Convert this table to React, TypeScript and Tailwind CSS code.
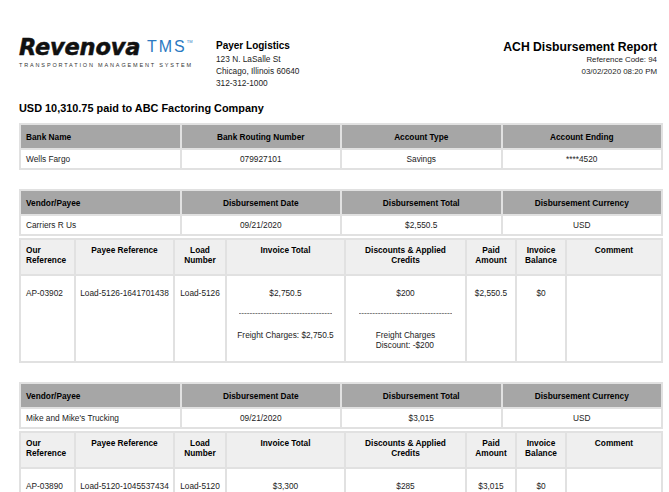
import React from 'react';

type Line = { main: string; charge: string[] };

type Invoice = {
  ourRef: string;
  payeeRef: string;
  load: string;
  total: Line;
  discount: Line;
  paid: string;
  balance: string;
};

type Payee = {
  name: string;
  date: string;
  total: string;
  currency: string;
  invoices: Invoice[];
};

const payees: Payee[] = [
  {
    name: 'Carriers R Us',
    date: '09/21/2020',
    total: '$2,550.5',
    currency: 'USD',
    invoices: [
      {
        ourRef: 'AP-03902',
        payeeRef: 'Load-5126-1641701438',
        load: 'Load-5126',
        total: { main: '$2,750.5', charge: ['Freight Charges: $2,750.5'] },
        discount: { main: '$200', charge: ['Freight Charges', 'Discount: -$200'] },
        paid: '$2,550.5',
        balance: '$0',
      },
    ],
  },
  {
    name: "Mike and Mike's Trucking",
    date: '09/21/2020',
    total: '$3,015',
    currency: 'USD',
    invoices: [
      {
        ourRef: 'AP-03890',
        payeeRef: 'Load-5120-1045537434',
        load: 'Load-5120',
        total: { main: '$3,300', charge: ['Freight Charges: $3,300'] },
        discount: { main: '$285', charge: ['Freight Charges', 'Discount: -$285'] },
        paid: '$3,015',
        balance: '$0',
      },
    ],
  },
];

const DASHES = '----------------------------------';

function SummaryTable({ heads, cells }: { heads: string[]; cells: string[] }) {
  return (
    <div className="grid w-[644px] grid-cols-4 gap-[2px] border-2 border-[#e1e1e1] bg-[#e1e1e1]">
      {heads.map((h, i) => (
        <div
          key={h}
          className={`flex h-[23px] items-center bg-[#a6a6a6] font-bold text-black ${
            i === 0 ? 'pl-[5px]' : 'justify-center'
          }`}
        >
          {h}
        </div>
      ))}
      {cells.map((c, i) => (
        <div
          key={i}
          className={`flex h-[18px] items-center bg-white text-[#1c1c1c] ${
            i === 0 ? 'pl-[5px]' : 'justify-center'
          }`}
        >
          {c}
        </div>
      ))}
    </div>
  );
}

function Split({ line }: { line: Line }) {
  return (
    <div className="flex flex-col items-center">
      <div>{line.main}</div>
      <div className="mt-[10px] overflow-hidden whitespace-nowrap text-[#555]">{DASHES}</div>
      <div className="mt-[12px] leading-[10px]">
        {line.charge.map((c) => (
          <div key={c}>{c}</div>
        ))}
      </div>
    </div>
  );
}

function DetailTable({ invoices }: { invoices: Invoice[] }) {
  const heads: React.ReactNode[] = [
    <>Our<br />Reference</>,
    'Payee Reference',
    <>Load<br />Number</>,
    'Invoice Total',
    <>Discounts &amp; Applied<br />Credits</>,
    <>Paid<br />Amount</>,
    <>Invoice<br />Balance</>,
    'Comment',
  ];
  return (
    <div className="mt-[2px] grid w-[644px] grid-cols-[53px_97px_50px_117px_119px_48px_48px_1fr] gap-[2px] border-2 border-[#e1e1e1] bg-[#e1e1e1]">
      {heads.map((h, i) => (
        <div
          key={i}
          className={`h-[34px] bg-[#efefef] pt-[5px] font-bold text-black ${
            i === 0 ? 'pl-[5px]' : 'text-center'
          }`}
        >
          {h}
        </div>
      ))}
      {invoices.map((inv) => (
        <React.Fragment key={inv.ourRef}>
          <div className="h-[85px] bg-white pl-[5px] pt-[12px]">{inv.ourRef}</div>
          <div className="bg-white pt-[12px] text-center">{inv.payeeRef}</div>
          <div className="bg-white pt-[12px] text-center">{inv.load}</div>
          <div className="bg-white pt-[12px]">
            <Split line={inv.total} />
          </div>
          <div className="bg-white pt-[12px]">
            <Split line={inv.discount} />
          </div>
          <div className="bg-white pt-[12px] text-center">{inv.paid}</div>
          <div className="bg-white pt-[12px] text-center">{inv.balance}</div>
          <div className="bg-white" />
        </React.Fragment>
      ))}
    </div>
  );
}

function Logo() {
  return (
    <div className="w-[197px] shrink-0">
      <div className="flex h-[24px] items-end whitespace-nowrap">
        <span className="w-[128px] shrink-0 font-['DejaVu_Sans',sans-serif] text-[22.5px] leading-[24px] font-bold italic tracking-[-0.2px] text-[#111] [-webkit-text-stroke:0.5px_#111]">
          Revenova
        </span>
        <span className="mb-[3px] shrink-0 text-[16px] leading-[18px] tracking-[2px] text-[#2b79c2]">TMS</span>
        <span className="mb-[15px] shrink-0 text-[4px] leading-[4px] text-[#2b79c2]">TM</span>
      </div>
      <div className="mt-[2px] whitespace-nowrap text-[5.5px] leading-[8px] tracking-[1.85px] text-[#333]">
        TRANSPORTATION MANAGEMENT SYSTEM
      </div>
    </div>
  );
}

export default function App() {
  return (
    <div className="min-h-screen w-[669px] bg-white pl-[19px] pt-[35px] pb-6 font-['Liberation_Sans',Arial,sans-serif] text-[8.3px] leading-[10px] text-[#1c1c1c]">
      <div className="flex w-[638px] items-start">
        <Logo />
        <div className="mt-[4px] text-[#1c1c1c]">
          <div className="text-[10px] leading-[14px] font-bold text-black">Payer Logistics</div>
          <div className="text-[8.3px] leading-[12px]">
            <div>123 N. LaSalle St</div>
            <div>Chicago, Illinois 60640</div>
            <div>312-312-1000</div>
          </div>
        </div>
        <div className="ml-auto mt-[5px] text-right">
          <div className="text-[12.2px] leading-[14px] font-bold text-black">ACH Disbursement Report</div>
          <div className="text-[7.9px] leading-[12px]">
            <div>Reference Code: 94</div>
            <div>03/02/2020 08:20 PM</div>
          </div>
        </div>
      </div>

      <h1 className="mt-[12px] text-[10.9px] leading-[14px] font-bold text-black">
        USD 10,310.75 paid to ABC Factoring Company
      </h1>

      <div className="mt-[8px]">
        <SummaryTable
          heads={['Bank Name', 'Bank Routing Number', 'Account Type', 'Account Ending']}
          cells={['Wells Fargo', '079927101', 'Savings', '****4520']}
        />
      </div>

      {payees.map((p) => (
        <div key={p.name} className="mt-[19px]">
          <SummaryTable
            heads={['Vendor/Payee', 'Disbursement Date', 'Disbursement Total', 'Disbursement Currency']}
            cells={[p.name, p.date, p.total, p.currency]}
          />
          <DetailTable invoices={p.invoices} />
        </div>
      ))}
    </div>
  );
}
